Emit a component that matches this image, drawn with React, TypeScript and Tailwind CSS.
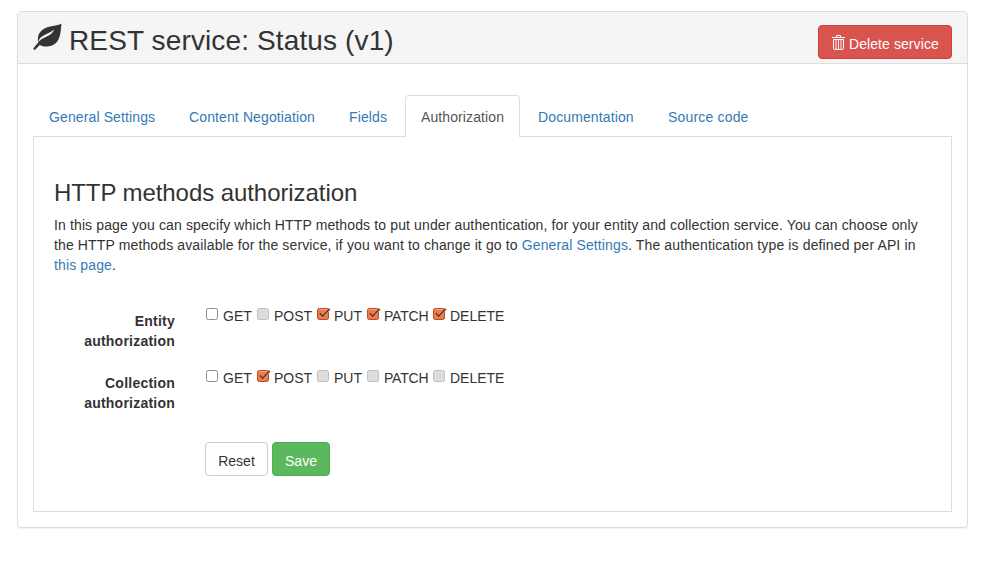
import React from "react";

type Method = { name: string; width: string; state: "off" | "on" | "disabled" };

function Leaf() {
  return (
    <svg className="h-[29px] w-[30px] shrink-0" viewBox="0 0 30 29" fill="none">
      <path
        d="M28.5 0.4C24 3.2 16 2.2 10.3 6.2C5.5 9.6 4 14 5.4 19.2L0.2 25.6L1.6 27.3L6.8 21.9C11.5 24.3 18 24.2 22.6 20.2C27.6 15.6 27.8 7.5 28.5 0.4Z"
        fill="#333"
      />
      <path d="M5.5 18.3C6.3 14.8 9 12.9 12.6 11.4C16 10 18.6 9 21 6.6C19.6 10.8 16.2 12.6 12.8 13.9C9.8 15.1 7.6 16.3 5.5 18.9Z" fill="#f5f5f5" />
    </svg>
  );
}

function Trash() {
  return (
    <svg className="h-[15px] w-[13px] shrink-0" viewBox="0 0 13 15" fill="none" stroke="#fff">
      <path d="M0 2.5H13" />
      <path d="M4.5 2.5V0.5H8.5V2.5" />
      <path d="M1.5 4.5V13.2Q1.5 14.4 2.7 14.4H10.3Q11.5 14.4 11.5 13.2V4.5Z" />
      <path d="M4 5V14M6.5 5V14M9 5V14" strokeOpacity="0.9" />
    </svg>
  );
}

function Box({ state }: { state: Method["state"] }) {
  if (state === "on") {
    return (
      <svg className="h-[13px] w-[14px] shrink-0" viewBox="0 0 14 13" fill="none">
        <rect x="0.5" y="0.5" width="11" height="11" rx="1.8" fill="#f3774c" stroke="#b94b25" />
        <path d="M2 1.5H10" stroke="#f9a47f" />
        <path d="M3 6L5.8 8.6L12.6 1.2" stroke="#f9a07c" strokeWidth="2.6" />
        <path d="M2.8 5.4L5.7 8.3L12.6 0.8" stroke="#63382c" strokeWidth="1.6" />
      </svg>
    );
  }
  return (
    <svg className="h-[13px] w-[14px] shrink-0" viewBox="0 0 14 13">
      <rect
        x="0.5"
        y="0.5"
        width="11"
        height="11"
        rx="1.8"
        fill={state === "disabled" ? "#dedddb" : "#fff"}
        stroke={state === "disabled" ? "#c1bfbd" : "#918f8d"}
      />
    </svg>
  );
}

const entity: Method[] = [
  { name: "GET", width: "w-[51px]", state: "off" },
  { name: "POST", width: "w-[60px]", state: "disabled" },
  { name: "PUT", width: "w-[50px]", state: "on" },
  { name: "PATCH", width: "w-[66px]", state: "on" },
  { name: "DELETE", width: "w-[80px]", state: "on" },
];

const collection: Method[] = [
  { name: "GET", width: "w-[51px]", state: "off" },
  { name: "POST", width: "w-[60px]", state: "on" },
  { name: "PUT", width: "w-[50px]", state: "disabled" },
  { name: "PATCH", width: "w-[66px]", state: "disabled" },
  { name: "DELETE", width: "w-[80px]", state: "disabled" },
];

function Row({ label, methods }: { label: string; methods: Method[] }) {
  return (
    <div className="flex h-[62px]">
      <div className="w-[121px] pt-[6px] text-right font-bold tracking-[0.23px]">
        {label}
        <br />
        authorization
      </div>
      <div className="flex h-5 pl-[31px]">
        {methods.map((m) => (
          <label key={m.name} className={`flex shrink-0 gap-[3px] ${m.width}`}>
            <span className="block pt-[3px]">
              <Box state={m.state} />
            </span>
            <span className={`pt-px ${m.name === "PATCH" ? "tracking-[-0.2px]" : "tracking-normal"}`}>{m.name}</span>
          </label>
        ))}
      </div>
    </div>
  );
}

const tabs = [
  { name: "General Settings", width: "w-[140px]" },
  { name: "Content Negotiation", width: "w-[160px]" },
  { name: "Fields", width: "w-[72px]" },
  { name: "Authorization", width: "w-[115px]" },
  { name: "Documentation", width: "w-[132px]" },
  { name: "Source code", width: "w-[120px]" },
];

export default function App() {
  return (
    <div className="h-[562px] bg-white pt-[11px] pl-[17px] font-['Liberation_Sans',Arial,sans-serif] text-[14px] leading-5 text-[#333]">
      <div className="h-[517px] w-[951px] rounded-[4px] border border-[#ddd] shadow-[0_1px_1px_rgba(0,0,0,0.05)]">
        <header className="flex h-[52px] justify-between rounded-t-[3px] border-b border-[#ddd] bg-[#f5f5f5] pr-[15px] pl-[15px]">
          <div className="flex pt-[11px]">
            <Leaf />
            <h1 className="pl-[6px] text-[28px] leading-[36px] tracking-[0.13px] whitespace-nowrap">REST service: Status (v1)</h1>
          </div>
          <button className="mt-[13px] flex h-[34px] w-[134px] items-center rounded-[4px] border border-[#d43f3a] bg-[#d9534f] pl-[13px] whitespace-nowrap text-white">
            <Trash />
            <span className="pt-[3px] pl-[4px] tracking-[0.08px]">Delete service</span>
          </button>
        </header>
        <div className="px-[15px] pt-[31px]">
          <nav className="flex h-[42px]">
            {tabs.map((t) =>
              t.name === "Authorization" ? (
                <a
                  key={t.name}
                  className={`z-10 -mb-px h-[42px] rounded-t-[4px] border border-b-0 border-[#ddd] bg-white pt-[11px] pl-[15px] tracking-[0.1px] whitespace-nowrap text-[#555] ${t.width}`}
                >
                  {t.name}
                </a>
              ) : (
                <a
                  key={t.name}
                  className={`pt-[12px] whitespace-nowrap text-[#337ab7] ${t.name === "Source code" ? "tracking-[0.18px]" : "tracking-[0.12px]"} ${t.name === "Documentation" ? "pl-[18px]" : "pl-[16px]"} ${t.width}`}
                >
                  {t.name}
                </a>
              ),
            )}
          </nav>
          <main className="-mt-px h-[376px] w-[919px] border border-[#ddd] pl-[20px]">
            <h2 className="pt-[41px] text-[24px] leading-[30px] tracking-[-0.07px]">HTTP methods authorization</h2>
            <p className="mt-[7px] tracking-[0.128px] whitespace-nowrap">
              In this page you can specify which HTTP methods to put under authentication, for your entity and collection service. You can choose only
              <br />
              the HTTP methods available for the service, if you want to change it go to <a className="text-[#337ab7]">General Settings</a>. The
              authentication type is defined per API in
              <br />
              <a className="text-[#337ab7]">this page</a>.
            </p>
            <form className="pt-[30px]">
              <Row label="Entity" methods={entity} />
              <Row label="Collection" methods={collection} />
              <div className="flex gap-[4px] pt-[13px] pl-[151px]">
                <button type="button" className="h-[34px] w-[63px] rounded-[4px] border border-[#ccc] bg-white pt-[3px]">
                  Reset
                </button>
                <button type="button" className="h-[34px] w-[58px] rounded-[4px] border border-[#4cae4c] bg-[#5cb85c] pt-[3px] text-white">
                  Save
                </button>
              </div>
            </form>
          </main>
        </div>
      </div>
    </div>
  );
}
